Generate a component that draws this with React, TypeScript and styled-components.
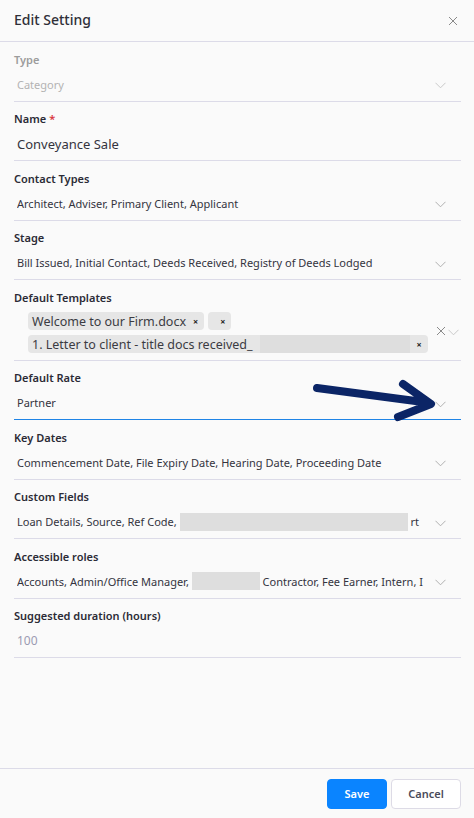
import { FC, ReactNode } from 'react';
import styled, { createGlobalStyle } from 'styled-components';

const Global = createGlobalStyle`
  html, body {
    margin: 0;
    padding: 0;
    background: #fafafa;
  }
  * {
    box-sizing: border-box;
  }
`;

const font = `'Noto Sans', 'DejaVu Sans', sans-serif`;

const Modal = styled.div`
  position: relative;
  height: 818px;
  width: 474px;
  display: flex;
  flex-direction: column;
  background: #fafafa;
  font-family: ${font};
`;

const Header = styled.div`
  height: 42px;
  padding: 0 16px 0 14px;
  display: flex;
  align-items: center;
  justify-content: space-between;
  border-bottom: 1px solid #dcdbe8;
`;

const Title = styled.h2`
  margin: 0 0 2px;
  font-size: 14px;
  font-weight: 500;
  color: #2f2f38;
`;

const Body = styled.div`
  flex: 1;
  padding: 0 13px 0 14px;
  display: flex;
  flex-direction: column;
`;

const FieldBox = styled.div<{ $active?: boolean }>`
  padding-top: 9.5px;
  border-bottom: 1px solid ${p => (p.$active ? '#1f84e6' : '#dcdbe8')};
`;

const Label = styled.div<{ $muted?: boolean }>`
  height: 16px;
  line-height: 16px;
  font-size: 11px;
  font-weight: 600;
  color: ${p => (p.$muted ? '#9c9c9c' : '#2b2b36')};
`;

const Required = styled.span`
  color: #d9363e;
  margin-left: 3px;
`;

const Row = styled.div<{ $tall?: boolean }>`
  height: ${p => (p.$tall ? '54px' : '33px')};
  display: flex;
  align-items: center;
  padding: 0 15px 0 3px;
  gap: 8px;
`;

const Value = styled.div<{ $tone?: 'muted' | 'hint' | 'big' }>`
  flex: 1;
  min-width: 0;
  white-space: nowrap;
  overflow: hidden;
  font-size: ${p => (p.$tone === 'big' ? '13px' : p.$tone === 'hint' ? '12px' : '11px')};
  color: ${p =>
    p.$tone === 'muted' ? '#b3b3b3' : p.$tone === 'hint' ? '#9a9ab2' : '#34343e'};
  display: flex;
  align-items: center;
`;

const Redact = styled.span<{ $w: number }>`
  display: inline-block;
  width: ${p => p.$w}px;
  height: 18px;
  background: #dedede;
  filter: blur(0.6px);
  flex-shrink: 0;
`;

const Chips = styled.div`
  flex: 1;
  padding-left: 11px;
  display: flex;
  flex-wrap: wrap;
  gap: 5px 4px;
  align-content: center;
`;

const Chip = styled.span<{ $empty?: boolean }>`
  height: 18px;
  padding: 0 6px 0 ${p => (p.$empty ? '12px' : '4px')};
  display: inline-flex;
  align-items: center;
  gap: 7px;
  background: #e6e6e6;
  border-radius: 4px;
  font-size: 12.5px;
  color: #3b3b42;
  white-space: nowrap;
`;

const ChipX = styled.span`
  font-size: 9px;
  font-weight: 700;
  color: #222;
`;

const Controls = styled.div`
  display: flex;
  align-items: center;
  gap: 2px;
  margin-right: -7px;
  margin-top: -4px;
`;

const Footer = styled.div`
  height: 50px;
  border-top: 1px solid #dcdbe8;
  display: flex;
  justify-content: flex-end;
  align-items: center;
  gap: 4px;
  padding: 0 13px 0 0;
`;

const Button = styled.button<{ $primary?: boolean }>`
  height: 30px;
  width: ${p => (p.$primary ? '60px' : '70px')};
  border-radius: 4px;
  font-family: ${font};
  font-size: 11px;
  font-weight: 600;
  cursor: pointer;
  border: 1px solid ${p => (p.$primary ? '#0a84ff' : '#dddbe6')};
  background: ${p => (p.$primary ? '#0a84ff' : '#ffffff')};
  color: ${p => (p.$primary ? '#ffffff' : '#4b4b5a')};
`;

const Annotation = styled.svg`
  position: absolute;
  left: 305px;
  top: 375px;
  pointer-events: none;
`;

const Chevron: FC<{ light?: boolean }> = ({ light }) => (
  <svg width="11" height="7" viewBox="0 0 11 7" style={{ flexShrink: 0, marginTop: 3 }}>
    <path d="M0.5 0.8 L5.5 5.8 L10.5 0.8" fill="none" stroke={light ? '#c4c4c4' : '#a8a8a8'} strokeWidth="0.9" />
  </svg>
);

const Cross: FC<{ size: number; color: string; width?: number }> = ({ size, color, width = 1 }) => (
  <svg width={size} height={size} viewBox="0 0 10 10">
    <path d="M1 1 L9 9 M9 1 L1 9" stroke={color} strokeWidth={width} fill="none" />
  </svg>
);

const Field: FC<{
  label: string;
  required?: boolean;
  muted?: boolean;
  active?: boolean;
  tall?: boolean;
  children: ReactNode;
}> = ({ label, required, muted, active, tall, children }) => (
  <FieldBox $active={active}>
    <Label $muted={muted}>
      {label}
      {required && <Required>*</Required>}
    </Label>
    <Row $tall={tall}>{children}</Row>
  </FieldBox>
);

const App: FC = () => (
  <Modal>
    <Global />
    <Header>
      <Title>Edit Setting</Title>
      <Cross size={10} color="#8a8a8a" />
    </Header>
    <Body>
      <Field label="Type" muted>
        <Value $tone="muted">Category</Value>
        <Chevron light />
      </Field>
      <Field label="Name" required>
        <Value $tone="big">Conveyance Sale</Value>
      </Field>
      <Field label="Contact Types">
        <Value>Architect, Adviser, Primary Client, Applicant</Value>
        <Chevron />
      </Field>
      <Field label="Stage">
        <Value>Bill Issued, Initial Contact, Deeds Received, Registry of Deeds Lodged</Value>
        <Chevron />
      </Field>
      <Field label="Default Templates" tall>
        <Chips>
          <Chip>
            Welcome to our Firm.docx <ChipX>×</ChipX>
          </Chip>
          <Chip $empty>
            <ChipX>×</ChipX>
          </Chip>
          <Chip>
            1. Letter to client - title docs received_
            <Redact $w={150} />
            <ChipX>×</ChipX>
          </Chip>
        </Chips>
        <Controls>
          <Cross size={10} color="#8a8a8a" />
          <Chevron light />
        </Controls>
      </Field>
      <Field label="Default Rate" active>
        <Value>Partner</Value>
        <Chevron />
      </Field>
      <Field label="Key Dates">
        <Value>Commencement Date, File Expiry Date, Hearing Date, Proceeding Date</Value>
        <Chevron />
      </Field>
      <Field label="Custom Fields">
        <Value>
          Loan Details, Source, Ref Code,&nbsp;
          <Redact $w={228} />
          &nbsp;rt
        </Value>
        <Chevron />
      </Field>
      <Field label="Accessible roles">
        <Value>
          Accounts, Admin/Office Manager,&nbsp;
          <Redact $w={68} />
          &nbsp;Contractor, Fee Earner, Intern, I
        </Value>
        <Chevron />
      </Field>
      <Field label="Suggested duration (hours)">
        <Value $tone="hint">100</Value>
      </Field>
    </Body>
    <Footer>
      <Button $primary>Save</Button>
      <Button>Cancel</Button>
    </Footer>
    <Annotation width="140" height="50" viewBox="0 0 140 50">
      <path
        d="M12 13 L118 27 M98 9 L126 29 L93 42"
        fill="none"
        stroke="#0b2566"
        strokeWidth="8"
        strokeLinecap="round"
        strokeLinejoin="round"
      />
    </Annotation>
  </Modal>
);

export default App;
